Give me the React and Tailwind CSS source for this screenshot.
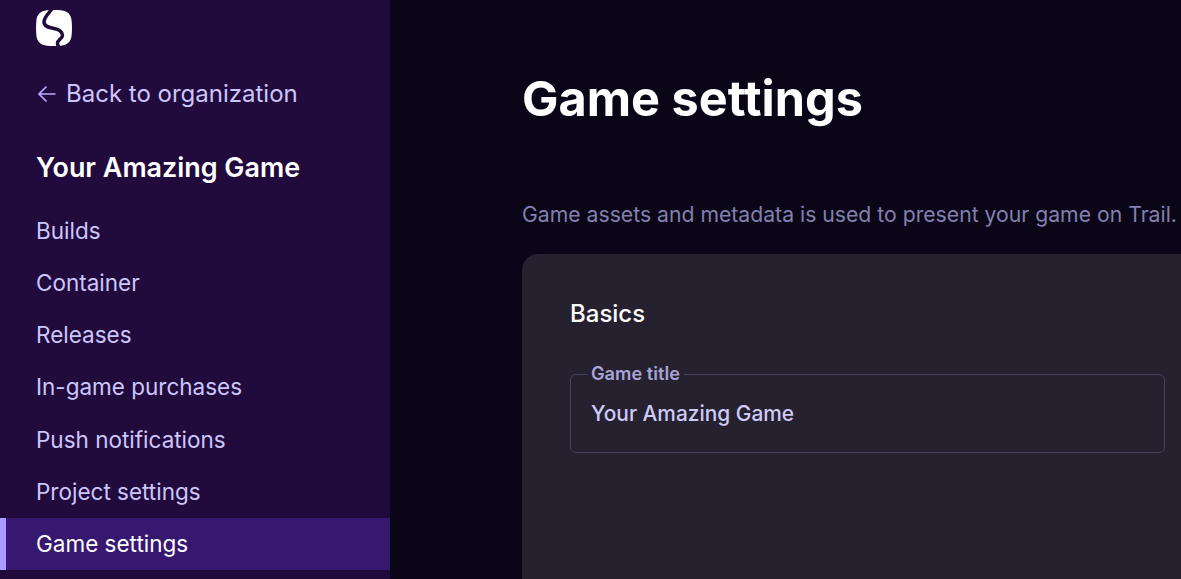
const navItems = [
  "Builds",
  "Container",
  "Releases",
  "In-game purchases",
  "Push notifications",
  "Project settings",
  "Game settings",
]

function Logo() {
  return (
    <svg width="36" height="36" viewBox="0 0 36 36" className="block">
      <path
        fill="#ffffff"
        d="M11 0.3 C16 -0.1 20 -0.1 25 0.3 C31.5 1 35 4.5 35.6 10.5 C36.1 15.5 36.1 20.5 35.6 25.5 C35 31.5 31.5 35 25 35.7 C20 36.1 16 36.1 11 35.7 C4.5 35 1 31.5 0.4 25.5 C-0.1 20.5 -0.1 15.5 0.4 10.5 C1 4.5 4.5 1 11 0.3 Z"
      />
      <path
        fill="none"
        stroke="#210b3c"
        strokeWidth="3.5"
        strokeLinecap="round"
        d="M16 -1 C13 3 8 7 8 12 C8 16.5 13 17.5 18 18.5 C23 19.5 26.5 21.5 26.5 25.5 C26.5 28.5 21.5 30 21.5 33 C21.5 34.5 22 36 23 37"
      />
    </svg>
  )
}

function Sidebar() {
  return (
    <aside className="w-[390px] h-full shrink-0 bg-[#210b3c] flex flex-col">
      <div className="pl-[36px] pt-[10px]">
        <Logo />
      </div>
      <a className="flex items-center pl-[36px] mt-[19px] h-[58px] text-[24px] text-[#cdc6fb]">
        <svg width="20" height="20" viewBox="0 0 20 20" fill="none" stroke="#b9a8ff" strokeWidth="1.7" className="mr-[10px]">
          <path d="M19.5 10H3M10.5 2.5 3 10l7.5 7.5" />
        </svg>
        Back to organization
      </a>
      <h2 className="pl-[36px] mt-[24px] h-[40px] leading-[40px] text-[26.9px] font-semibold text-white">
        Your Amazing Game
      </h2>
      <nav className="mt-[17.7px] flex flex-col">
        {navItems.map((item) => {
          const active = item === "Game settings"
          return (
            <a
              key={item}
              className={
                active
                  ? "h-[52.17px] flex items-center pl-[30px] border-l-[6px] border-[#ab9aff] bg-[#371870] text-[22.5px] text-white"
                  : "h-[52.17px] flex items-center pl-[36px] text-[22.5px] text-[#cdc6fb]"
              }
            >
              {item}
            </a>
          )
        })}
      </nav>
    </aside>
  )
}

export default function App() {
  return (
    <div
      className="w-[1181px] h-[579px] overflow-hidden flex bg-[#0a0618]"
      style={{ fontFamily: 'Inter, "Liberation Sans", sans-serif' }}
    >
      <Sidebar />
      <main className="flex-1 pl-[132px] min-w-0 overflow-hidden">
        <h1 className="mt-[65px] text-[48.6px] leading-[68px] font-bold text-white whitespace-nowrap">Game settings</h1>
        <p className="mt-[66px] text-[21.2px] leading-[30px] text-[#8480ae] whitespace-nowrap">
          Game assets and metadata is used to present your game on Trail.
        </p>
        <section className="mt-[25px] w-[800px] h-[400px] bg-[#25212f] rounded-tl-[16px] pl-[48px] pr-[156px] pt-[42px]">
          <h3 className="text-[24px] leading-[36px] font-medium text-white">Basics</h3>
          <div className="relative mt-[42px] h-[79px] w-[595px] rounded-[6px] border border-[#47425c] px-[20px] flex items-center">
            <span className="absolute left-[16px] top-[-13px] px-[4px] bg-[#25212f] text-[18.2px] leading-[22px] font-semibold text-[#a9a3d6]">
              Game title
            </span>
            <span className="text-[20.9px] font-medium text-[#cfcaf7]">Your Amazing Game</span>
          </div>
        </section>
      </main>
    </div>
  )
}
